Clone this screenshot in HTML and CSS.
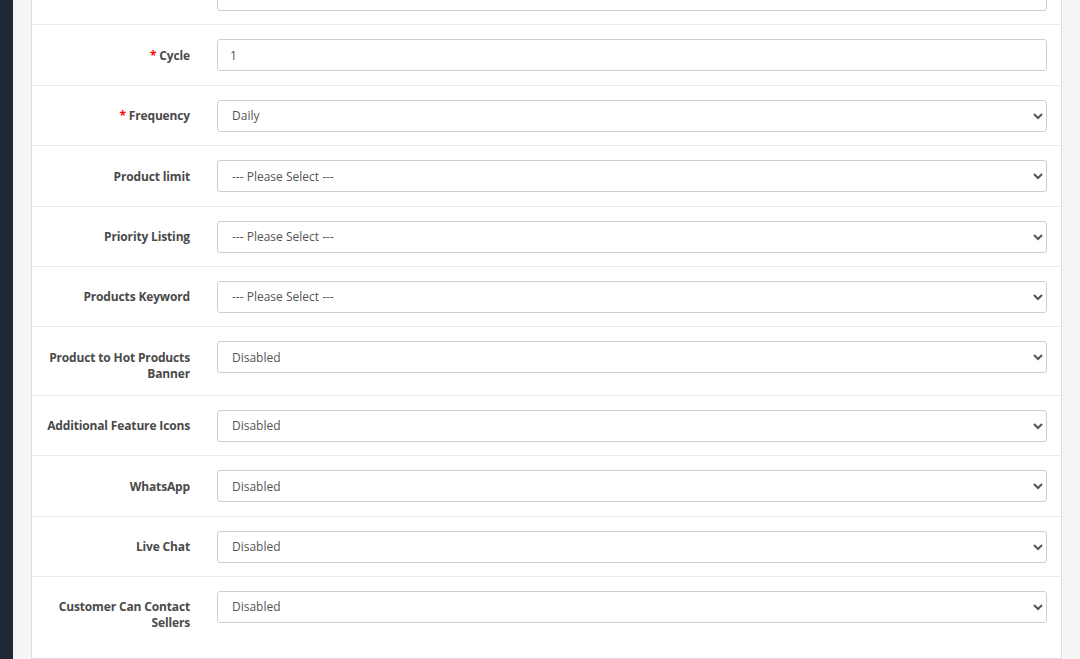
FILE: index.html
```html
<!DOCTYPE html>
<html>
<head>
<meta charset="utf-8">
<link rel="stylesheet" href="styles.css">
</head>
<body>
<div class="layout">
  <aside class="sidebar"></aside>
  <main class="main">
    <div class="panel">
      <div class="row first">
        <label class="label"></label>
        <div class="field"><input class="control" type="text" value=""></div>
      </div>
      <div class="row">
        <label class="label"><span class="req">*</span> Cycle</label>
        <div class="field"><input class="control" type="text" value="1"></div>
      </div>
      <div class="row">
        <label class="label"><span class="req">*</span> Frequency</label>
        <div class="field"><select class="control"><option>Daily</option></select></div>
      </div>
      <div class="row">
        <label class="label">Product limit</label>
        <div class="field"><select class="control"><option>--- Please Select ---</option></select></div>
      </div>
      <div class="row">
        <label class="label">Priority Listing</label>
        <div class="field"><select class="control"><option>--- Please Select ---</option></select></div>
      </div>
      <div class="row">
        <label class="label">Products Keyword</label>
        <div class="field"><select class="control"><option>--- Please Select ---</option></select></div>
      </div>
      <div class="row">
        <label class="label">Product to Hot Products Banner</label>
        <div class="field"><select class="control"><option>Disabled</option></select></div>
      </div>
      <div class="row">
        <label class="label">Additional Feature Icons</label>
        <div class="field"><select class="control"><option>Disabled</option></select></div>
      </div>
      <div class="row">
        <label class="label">WhatsApp</label>
        <div class="field"><select class="control"><option>Disabled</option></select></div>
      </div>
      <div class="row">
        <label class="label">Live Chat</label>
        <div class="field"><select class="control"><option>Disabled</option></select></div>
      </div>
      <div class="row">
        <label class="label">Customer Can Contact Sellers</label>
        <div class="field"><select class="control"><option>Disabled</option></select></div>
      </div>
    </div>
  </main>
</div>
</body>
</html>
```
FILE: styles.css
```css
html, body {
  margin: 0;
  padding: 0;
  height: 100%;
  overflow: hidden;
}
body {
  font-family: "Open Sans", "Liberation Sans", sans-serif;
  font-size: 12px;
  color: #555;
  background: #f5f5f5;
}
.layout {
  display: flex;
  height: 659px;
}
.sidebar {
  width: 13px;
  flex: none;
  background: #1e2933;
}
.main {
  flex: 1;
  padding: 0 18px;
  background: #f5f5f5;
}
.panel {
  margin-top: -36px;
  background: #fff;
  border: 1px solid #dcdcdc;
  padding-bottom: 13.5px;
}
.row {
  display: flex;
  align-items: flex-start;
  padding: 14px 14px 13.4px 0;
  border-top: 1px solid #ebebeb;
}
.row.first {
  border-top: none;
}
.label {
  box-sizing: border-box;
  width: 158px;
  flex: none;
  padding: 8.5px 0 0 8px;
  margin: 0 27px -0.5px 0;
  text-align: right;
  font-weight: 700;
  letter-spacing: -0.15px;
  line-height: 16px;
  color: #4a4a4a;
}
.req {
  color: #f00;
}
.field {
  flex: 1;
}
.control {
  box-sizing: border-box;
  display: block;
  width: 100%;
  height: 32px;
  padding: 0 12px;
  border: 1px solid #cfcfcf;
  border-radius: 3px;
  background: #fff;
  font-family: "Open Sans", "Liberation Sans", sans-serif;
  font-size: 12px;
  color: #555;
  outline: none;
}
select.control {
  padding-left: 10px;
}
```
